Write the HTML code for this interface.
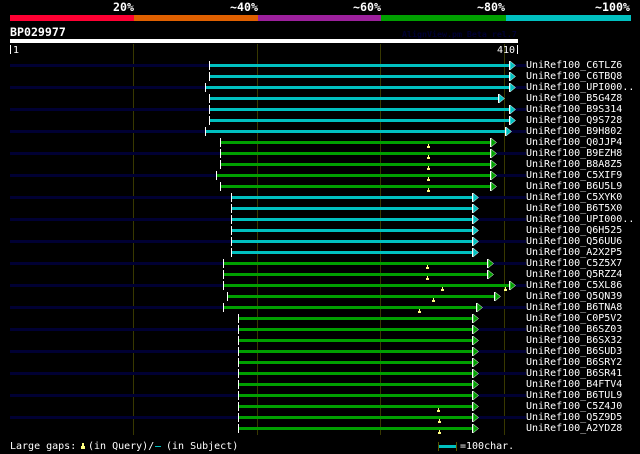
<!DOCTYPE html>
<html><head><meta charset="utf-8"><style>
html,body{margin:0;padding:0;background:#000;width:640px;height:454px;overflow:hidden}
svg{display:block}
text{font-family:"DejaVu Sans Mono","Liberation Mono",monospace;font-size:10px;fill:#fff}
.b{font-weight:bold;font-size:11.6px}
.g{fill:#383800}.n{fill:#000033}.c{fill:#00c0c0}.v{fill:#00a000}.w{fill:#fff}
.a{stroke:#fff;stroke-width:.5}
.m{fill:#ffff80}
</style></head><body>
<svg width="640" height="454" xmlns="http://www.w3.org/2000/svg">
<text class="b" x="113" y="11">20%</text><text class="b" x="230" y="11">~40%</text><text class="b" x="353" y="11">~60%</text><text class="b" x="477" y="11">~80%</text><text class="b" x="595" y="11">~100%</text>
<g shape-rendering="crispEdges">
<rect x="10" y="15" width="124" height="6" fill="#ff0033"/><rect x="134" y="15" width="124" height="6" fill="#e06000"/><rect x="258" y="15" width="123" height="6" fill="#9c209c"/><rect x="381" y="15" width="125" height="6" fill="#00a000"/><rect x="506" y="15" width="125" height="6" fill="#00c0c0"/>
<rect x="10" y="39" width="508" height="4" class="w"/>
<rect x="10" y="45" width="1" height="9" class="w"/><rect x="517" y="45" width="1" height="9" class="w"/>
<rect x="133" y="44" width="1" height="391" class="g"/><rect x="257" y="44" width="1" height="391" class="g"/><rect x="380" y="44" width="1" height="391" class="g"/><rect x="504" y="44" width="1" height="391" class="g"/>
<rect x="10" y="64" width="199" height="3" class="n"/><rect x="515" y="64" width="11" height="3" class="n"/>
<rect x="10" y="86" width="195" height="3" class="n"/><rect x="515" y="86" width="11" height="3" class="n"/>
<rect x="10" y="108" width="199" height="3" class="n"/><rect x="515" y="108" width="11" height="3" class="n"/>
<rect x="10" y="130" width="195" height="3" class="n"/><rect x="511" y="130" width="15" height="3" class="n"/>
<rect x="10" y="152" width="210" height="3" class="n"/><rect x="496" y="152" width="30" height="3" class="n"/>
<rect x="10" y="174" width="206" height="3" class="n"/><rect x="496" y="174" width="30" height="3" class="n"/>
<rect x="10" y="196" width="221" height="3" class="n"/><rect x="478" y="196" width="48" height="3" class="n"/>
<rect x="10" y="218" width="221" height="3" class="n"/><rect x="478" y="218" width="48" height="3" class="n"/>
<rect x="10" y="240" width="221" height="3" class="n"/><rect x="478" y="240" width="48" height="3" class="n"/>
<rect x="10" y="262" width="213" height="3" class="n"/><rect x="493" y="262" width="33" height="3" class="n"/>
<rect x="10" y="284" width="213" height="3" class="n"/><rect x="515" y="284" width="11" height="3" class="n"/>
<rect x="10" y="306" width="213" height="3" class="n"/><rect x="482" y="306" width="44" height="3" class="n"/>
<rect x="10" y="328" width="228" height="3" class="n"/><rect x="478" y="328" width="48" height="3" class="n"/>
<rect x="10" y="350" width="228" height="3" class="n"/><rect x="478" y="350" width="48" height="3" class="n"/>
<rect x="10" y="372" width="228" height="3" class="n"/><rect x="478" y="372" width="48" height="3" class="n"/>
<rect x="10" y="394" width="228" height="3" class="n"/><rect x="478" y="394" width="48" height="3" class="n"/>
<rect x="10" y="416" width="228" height="3" class="n"/><rect x="478" y="416" width="48" height="3" class="n"/>
<rect x="209" y="64" width="300" height="3" class="c"/><rect x="209" y="61" width="1" height="9" class="w"/>
<rect x="209" y="75" width="300" height="3" class="c"/><rect x="209" y="72" width="1" height="9" class="w"/>
<rect x="205" y="86" width="304" height="3" class="c"/><rect x="205" y="83" width="1" height="9" class="w"/>
<rect x="209" y="97" width="289" height="3" class="c"/><rect x="209" y="94" width="1" height="9" class="w"/>
<rect x="209" y="108" width="300" height="3" class="c"/><rect x="209" y="105" width="1" height="9" class="w"/>
<rect x="209" y="119" width="300" height="3" class="c"/><rect x="209" y="116" width="1" height="9" class="w"/>
<rect x="205" y="130" width="300" height="3" class="c"/><rect x="205" y="127" width="1" height="9" class="w"/>
<rect x="220" y="141" width="270" height="3" class="v"/><rect x="220" y="138" width="1" height="9" class="w"/>
<rect x="220" y="152" width="270" height="3" class="v"/><rect x="220" y="149" width="1" height="9" class="w"/>
<rect x="220" y="163" width="270" height="3" class="v"/><rect x="220" y="160" width="1" height="9" class="w"/>
<rect x="216" y="174" width="274" height="3" class="v"/><rect x="216" y="171" width="1" height="9" class="w"/>
<rect x="220" y="185" width="270" height="3" class="v"/><rect x="220" y="182" width="1" height="9" class="w"/>
<rect x="231" y="196" width="241" height="3" class="c"/><rect x="231" y="193" width="1" height="9" class="w"/>
<rect x="231" y="207" width="241" height="3" class="c"/><rect x="231" y="204" width="1" height="9" class="w"/>
<rect x="231" y="218" width="241" height="3" class="c"/><rect x="231" y="215" width="1" height="9" class="w"/>
<rect x="231" y="229" width="241" height="3" class="c"/><rect x="231" y="226" width="1" height="9" class="w"/>
<rect x="231" y="240" width="241" height="3" class="c"/><rect x="231" y="237" width="1" height="9" class="w"/>
<rect x="231" y="251" width="241" height="3" class="c"/><rect x="231" y="248" width="1" height="9" class="w"/>
<rect x="223" y="262" width="264" height="3" class="v"/><rect x="223" y="259" width="1" height="9" class="w"/>
<rect x="223" y="273" width="264" height="3" class="v"/><rect x="223" y="270" width="1" height="9" class="w"/>
<rect x="223" y="284" width="286" height="3" class="v"/><rect x="223" y="281" width="1" height="9" class="w"/>
<rect x="227" y="295" width="267" height="3" class="v"/><rect x="227" y="292" width="1" height="9" class="w"/>
<rect x="223" y="306" width="253" height="3" class="v"/><rect x="223" y="303" width="1" height="9" class="w"/>
<rect x="238" y="317" width="234" height="3" class="v"/><rect x="238" y="314" width="1" height="9" class="w"/>
<rect x="238" y="328" width="234" height="3" class="v"/><rect x="238" y="325" width="1" height="9" class="w"/>
<rect x="238" y="339" width="234" height="3" class="v"/><rect x="238" y="336" width="1" height="9" class="w"/>
<rect x="238" y="350" width="234" height="3" class="v"/><rect x="238" y="347" width="1" height="9" class="w"/>
<rect x="238" y="361" width="234" height="3" class="v"/><rect x="238" y="358" width="1" height="9" class="w"/>
<rect x="238" y="372" width="234" height="3" class="v"/><rect x="238" y="369" width="1" height="9" class="w"/>
<rect x="238" y="383" width="234" height="3" class="v"/><rect x="238" y="380" width="1" height="9" class="w"/>
<rect x="238" y="394" width="234" height="3" class="v"/><rect x="238" y="391" width="1" height="9" class="w"/>
<rect x="238" y="405" width="234" height="3" class="v"/><rect x="238" y="402" width="1" height="9" class="w"/>
<rect x="238" y="416" width="234" height="3" class="v"/><rect x="238" y="413" width="1" height="9" class="w"/>
<rect x="238" y="427" width="234" height="3" class="v"/><rect x="238" y="424" width="1" height="9" class="w"/>
<rect x="155" y="446" width="6" height="1" class="c"/>
<rect x="438" y="442" width="1" height="9" fill="#555500"/><rect x="456" y="442" width="1" height="9" fill="#555500"/><rect x="439" y="445" width="17" height="3" class="c"/>
</g>
<g class="a" transform="translate(.5 0)">
<polygon class="c" points="509.5,61 515,65.5 509.5,70"/><polygon class="c" points="509.5,72 515,76.5 509.5,81"/><polygon class="c" points="509.5,83 515,87.5 509.5,92"/><polygon class="c" points="498.5,94 504,98.5 498.5,103"/><polygon class="c" points="509.5,105 515,109.5 509.5,114"/><polygon class="c" points="509.5,116 515,120.5 509.5,125"/><polygon class="c" points="505.5,127 511,131.5 505.5,136"/>
<polygon class="v" points="490.5,138 496,142.5 490.5,147"/><polygon class="v" points="490.5,149 496,153.5 490.5,158"/><polygon class="v" points="490.5,160 496,164.5 490.5,169"/><polygon class="v" points="490.5,171 496,175.5 490.5,180"/><polygon class="v" points="490.5,182 496,186.5 490.5,191"/>
<polygon class="c" points="472.5,193 478,197.5 472.5,202"/><polygon class="c" points="472.5,204 478,208.5 472.5,213"/><polygon class="c" points="472.5,215 478,219.5 472.5,224"/><polygon class="c" points="472.5,226 478,230.5 472.5,235"/><polygon class="c" points="472.5,237 478,241.5 472.5,246"/><polygon class="c" points="472.5,248 478,252.5 472.5,257"/>
<polygon class="v" points="487.5,259 493,263.5 487.5,268"/><polygon class="v" points="487.5,270 493,274.5 487.5,279"/><polygon class="v" points="509.5,281 515,285.5 509.5,290"/><polygon class="v" points="494.5,292 500,296.5 494.5,301"/><polygon class="v" points="476.5,303 482,307.5 476.5,312"/>
<polygon class="v" points="472.5,314 478,318.5 472.5,323"/><polygon class="v" points="472.5,325 478,329.5 472.5,334"/><polygon class="v" points="472.5,336 478,340.5 472.5,345"/><polygon class="v" points="472.5,347 478,351.5 472.5,356"/><polygon class="v" points="472.5,358 478,362.5 472.5,367"/><polygon class="v" points="472.5,369 478,373.5 472.5,378"/><polygon class="v" points="472.5,380 478,384.5 472.5,389"/><polygon class="v" points="472.5,391 478,395.5 472.5,400"/><polygon class="v" points="472.5,402 478,406.5 472.5,411"/><polygon class="v" points="472.5,413 478,417.5 472.5,422"/><polygon class="v" points="472.5,424 478,428.5 472.5,433"/>
</g>
<path class="w" shape-rendering="crispEdges" d="M509 61h1v9h-1zM509 72h1v9h-1zM509 83h1v9h-1zM498 94h1v9h-1zM509 105h1v9h-1zM509 116h1v9h-1zM505 127h1v9h-1zM490 138h1v9h-1zM490 149h1v9h-1zM490 160h1v9h-1zM490 171h1v9h-1zM490 182h1v9h-1zM472 193h1v9h-1zM472 204h1v9h-1zM472 215h1v9h-1zM472 226h1v9h-1zM472 237h1v9h-1zM472 248h1v9h-1zM487 259h1v9h-1zM487 270h1v9h-1zM509 281h1v9h-1zM494 292h1v9h-1zM476 303h1v9h-1zM472 314h1v9h-1zM472 325h1v9h-1zM472 336h1v9h-1zM472 347h1v9h-1zM472 358h1v9h-1zM472 369h1v9h-1zM472 380h1v9h-1zM472 391h1v9h-1zM472 402h1v9h-1zM472 413h1v9h-1zM472 424h1v9h-1z"/>
<path class="m" shape-rendering="crispEdges" d="M428 144h1v2h-1zM427 146h3v2h-3zM428 155h1v2h-1zM427 157h3v2h-3zM428 166h1v2h-1zM427 168h3v2h-3zM428 177h1v2h-1zM427 179h3v2h-3zM428 188h1v2h-1zM427 190h3v2h-3zM427 265h1v2h-1zM426 267h3v2h-3zM427 276h1v2h-1zM426 278h3v2h-3zM442 287h1v2h-1zM441 289h3v2h-3zM505 287h1v2h-1zM504 289h3v2h-3zM433 298h1v2h-1zM432 300h3v2h-3zM419 309h1v2h-1zM418 311h3v2h-3zM438 408h1v2h-1zM437 410h3v2h-3zM439 419h1v2h-1zM438 421h3v2h-3zM439 430h1v2h-1zM438 432h3v2h-3zM82 443h2v3h-2zM81 446h4v3h-4z"/>
<text class="b" x="10" y="36">BP029977</text>
<text x="402" y="37" style="fill:#000033;font-weight:bold;font-size:8.3px">AlignView.pm Beta rel.7</text>
<text x="13" y="53">1</text><text x="497" y="53">410</text>
<text x="526" y="68">UniRef100_C6TLZ6</text><text x="526" y="79">UniRef100_C6TBQ8</text><text x="526" y="90">UniRef100_UPI000..</text><text x="526" y="101">UniRef100_B5G4Z8</text><text x="526" y="112">UniRef100_B9S314</text><text x="526" y="123">UniRef100_Q9S728</text><text x="526" y="134">UniRef100_B9H802</text><text x="526" y="145">UniRef100_Q0JJP4</text><text x="526" y="156">UniRef100_B9EZH8</text><text x="526" y="167">UniRef100_B8A8Z5</text><text x="526" y="178">UniRef100_C5XIF9</text><text x="526" y="189">UniRef100_B6U5L9</text><text x="526" y="200">UniRef100_C5XYK0</text><text x="526" y="211">UniRef100_B6T5X0</text><text x="526" y="222">UniRef100_UPI000..</text><text x="526" y="233">UniRef100_Q6H525</text><text x="526" y="244">UniRef100_Q56UU6</text><text x="526" y="255">UniRef100_A2X2P5</text><text x="526" y="266">UniRef100_C5Z5X7</text><text x="526" y="277">UniRef100_Q5RZZ4</text><text x="526" y="288">UniRef100_C5XL86</text><text x="526" y="299">UniRef100_Q5QN39</text><text x="526" y="310">UniRef100_B6TNA8</text><text x="526" y="321">UniRef100_C0P5V2</text><text x="526" y="332">UniRef100_B6SZ03</text><text x="526" y="343">UniRef100_B6SX32</text><text x="526" y="354">UniRef100_B6SUD3</text><text x="526" y="365">UniRef100_B6SRY2</text><text x="526" y="376">UniRef100_B6SR41</text><text x="526" y="387">UniRef100_B4FTV4</text><text x="526" y="398">UniRef100_B6TUL9</text><text x="526" y="409">UniRef100_C5Z4J0</text><text x="526" y="420">UniRef100_Q5Z9D5</text><text x="526" y="431">UniRef100_A2YDZ8</text>
<text x="10" y="449">Large gaps:</text><text x="88" y="449">(in Query)/</text><text x="166" y="449">(in Subject)</text>
<text x="460" y="449">=100char.</text>
</svg>
</body></html>
